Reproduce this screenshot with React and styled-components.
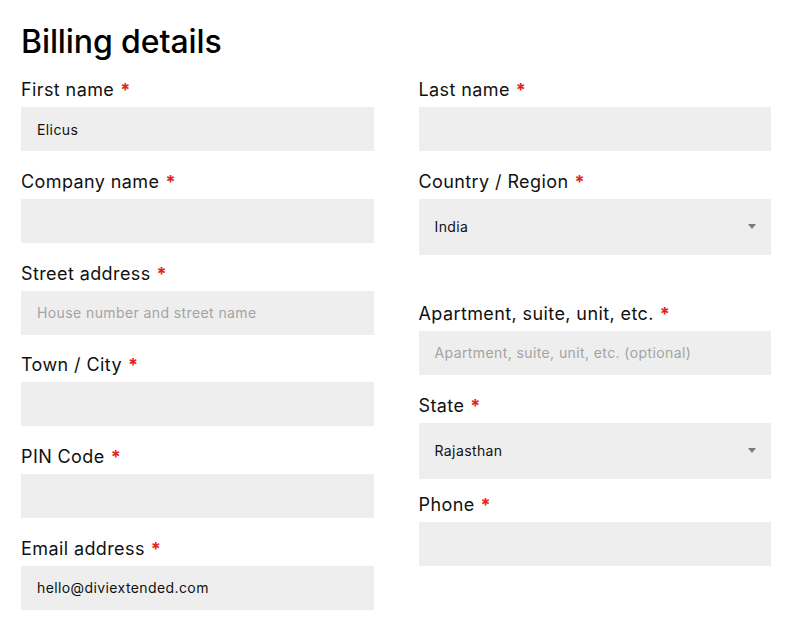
import React from "react";
import styled, { createGlobalStyle } from "styled-components";

const Global = createGlobalStyle`
  html, body { margin: 0; padding: 0; background: #ffffff; }
  body { font-family: "Inter", "Noto Sans", sans-serif; color: #000; }
  * { box-sizing: border-box; }
`;

const Page = styled.div`
  width: 790px;
  padding: 22px 19px 30px 21px;
`;

const Heading = styled.h3`
  margin: 0 0 14px;
  font-size: 32px;
  line-height: 40px;
  font-weight: 500;
  color: #000;
  letter-spacing: -0.1px;
`;

const Columns = styled.div`
  display: grid;
  grid-template-columns: 1fr 1fr;
  column-gap: 45px;
`;

const Column = styled.div`
  display: flex;
  flex-direction: column;
`;

const Field = styled.div`
  display: flex;
  flex-direction: column;
  margin-top: ${(p) => p.$offset || 0}px;
  margin-bottom: ${(p) => (p.$tall ? 12 : 16.8)}px;
`;

const Label = styled.label`
  font-size: 18px;
  line-height: 27px;
  font-weight: 400;
  color: #111;
  letter-spacing: 0.4px;
  margin-bottom: 4px;
`;

const Required = styled.span`
  color: #e2231a;
  font-weight: 700;
  margin-left: 6px;
`;

const Input = styled.div`
  height: ${(p) => (p.$tall ? 56 : 44)}px;
  background: #eeeeee;
  display: flex;
  align-items: center;
  justify-content: space-between;
  padding: 0 16px 0 16px;
  font-size: 14px;
  color: ${(p) => (p.$placeholder ? "#a3a3a3" : "#111")};
  letter-spacing: 0.4px;
`;

const Arrow = styled.span`
  width: 0;
  height: 0;
  border-left: 4px solid transparent;
  border-right: 4px solid transparent;
  border-top: 5px solid #7a7a7a;
  margin-right: -1px;
`;

function FormField({ label, value, placeholder, select, offset }) {
  return (
    <Field $tall={select} $offset={offset}>
      <Label>
        {label}
        <Required>*</Required>
      </Label>
      <Input $tall={select} $placeholder={!value && !!placeholder}>
        <span>{value || placeholder || ""}</span>
        {select && <Arrow />}
      </Input>
    </Field>
  );
}

export default function App() {
  return (
    <>
      <Global />
      <Page>
        <Heading>Billing details</Heading>
        <Columns>
          <Column>
            <FormField label="First name" value="Elicus" />
            <FormField label="Company name" />
            <FormField label="Street address" placeholder="House number and street name" />
            <FormField label="Town / City" />
            <FormField label="PIN Code" />
            <FormField label="Email address" value="hello@diviextended.com" />
          </Column>
          <Column>
            <FormField label="Last name" />
            <FormField label="Country / Region" value="India" select />
            <FormField
              label="Apartment, suite, unit, etc."
              placeholder="Apartment, suite, unit, etc. (optional)"
              offset={33}
            />
            <FormField label="State" value="Rajasthan" select />
            <FormField label="Phone" />
          </Column>
        </Columns>
      </Page>
    </>
  );
}
